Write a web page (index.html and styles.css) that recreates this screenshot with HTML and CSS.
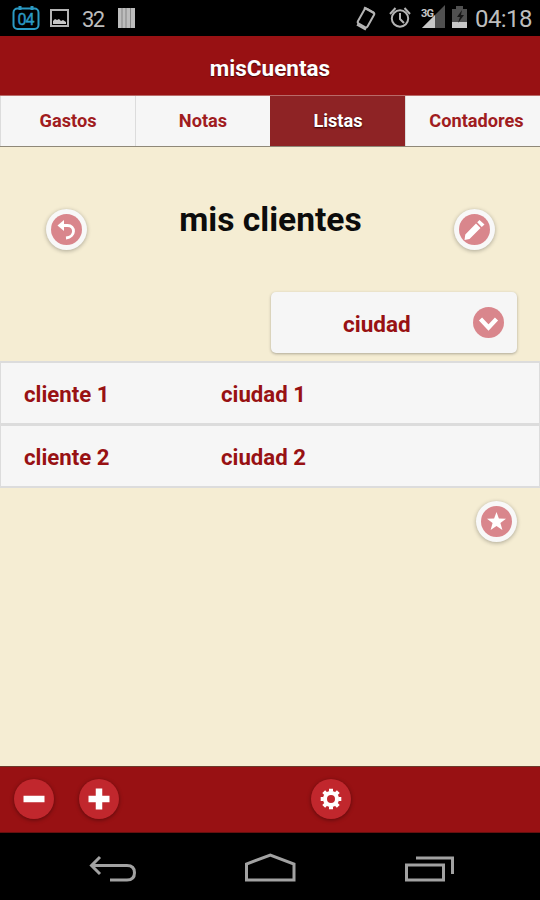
FILE: index.html
```html
<!DOCTYPE html>
<html lang="es">
<head>
    <meta charset="UTF-8">
    <meta name="viewport" content="width=device-width, initial-scale=1.0">
    <title>misCuentas</title>
    <link rel="stylesheet" href="styles.css">
</head>
<body>

    <div class="status-bar">
        <svg class="status-icons" width="150" height="36" viewBox="0 0 150 36">
            <rect x="13.5" y="8.5" width="25" height="20.5" rx="4" fill="none" stroke="#2b9ac4" stroke-width="2"/>
            <path d="M20 6v4M32 6v4" stroke="#2b9ac4" stroke-width="3"/>
            <text x="17.5" y="24.5" class="calendar-day" textLength="17">04</text>
            <rect x="51" y="10" width="17" height="16" fill="none" stroke="#b4b4b4" stroke-width="2"/>
            <path d="M53 24v-3l2-2 2 1 2-1 2 2 2-1 3 2v2z" fill="#c8c8c8"/>
            <text x="82" y="26.500" class="status-temp" textLength="23">32</text>
            <rect x="118" y="8" width="17" height="20" fill="#bdbdbd"/>
            <path d="M122 8v20M126 8v20M130.500 8v20" stroke="#858585" stroke-width="1"/>
        </svg>
        <div class="status-right">
            <svg width="120" height="36" viewBox="0 0 120 36">
                <g fill="none" stroke="#b4b4b4" stroke-width="2">
                    <rect x="1.500" y="8.500" width="11" height="17" rx="2" transform="translate(4 1) rotate(29 7 17)"/>
                    <path d="M9 7.500l10 5.500M2 24.500l9 5" stroke-width="2.500"/>
                    <circle cx="45" cy="18.500" r="8.200"/>
                    <path d="M45 13v6l4 4M35 14l5.500-6M49.500 8l5.500 6"/>
                </g>
                <path d="M90 5v23H67z" fill="#505050"/>
                <path d="M80 15v13H67z" fill="#c8c8c8"/>
                <text x="66" y="17" class="network-type" textLength="13">3G</text>
                <path d="M97 9h4V6h7v3h4v19H97z" fill="#505050"/>
                <path d="M97 22h15v6H97z" fill="#c8c8c8"/>
                <path d="M107 10l-5 7h3l-2 6 6-8h-3z" fill="#161616"/>
            </svg>
            <span class="clock">04:18</span>
        </div>
    </div>

    <header class="header">misCuentas</header>

    <nav class="tabs">
        <a class="tab">Gastos</a>
        <a class="tab">Notas</a>
        <a class="tab tab-active">Listas</a>
        <a class="tab tab-last">Contadores</a>
    </nav>

    <main class="content">
        <div class="title-row">
            <button class="round-btn" aria-label="Volver">
                <svg width="31" height="31" viewBox="0 0 31 31">
                    <circle cx="15.500" cy="15.500" r="15.500" fill="#d9868c"/>
                    <path d="M11 11.500h5.500c8 0 8.500 11.500-1.500 12.500" fill="none" stroke="#fff" stroke-width="2.800"/>
                    <path d="M6.500 11.500L13 6v11z" fill="#fff"/>
                </svg>
            </button>
            <h1 class="title">mis clientes</h1>
            <button class="round-btn" aria-label="Editar">
                <svg width="31" height="31" viewBox="0 0 31 31">
                    <circle cx="15.500" cy="15.500" r="15.500" fill="#d9868c"/>
                    <path d="M17 9.500l4.500 4.500L10.500 25l-5 1 .800-5.500zM18.200 8.300L20.500 6l5 4.500-2.800 2.500z" fill="#fff"/>
                </svg>
            </button>
        </div>

        <div class="select">
            <span>ciudad</span>
            <svg width="31" height="31" viewBox="0 0 31 31">
                <circle cx="15.500" cy="15.500" r="15.500" fill="#d9868c"/>
                <path d="M7.500 12l8 8.500 8-8.500" fill="none" stroke="#fff" stroke-width="4.300"/>
            </svg>
        </div>

        <div class="list">
            <div class="list-row"><span>cliente 1</span><span>ciudad 1</span></div>
            <div class="list-row"><span>cliente 2</span><span>ciudad 2</span></div>
        </div>

        <button class="round-btn star-btn" aria-label="Favorito">
            <svg width="31" height="31" viewBox="0 0 31 31">
                <circle cx="15.500" cy="15.500" r="15.500" fill="#d9868c"/>
                <path d="M15.500 6l2.400 6.600 7.100.200-5.600 4.300 2 6.900-5.900-4-5.900 4 2-6.900L6 12.800l7.100-.200z" fill="#fff"/>
            </svg>
        </button>
    </main>

    <footer class="footer">
        <button class="footer-btn" aria-label="Quitar">
            <svg width="22" height="22" viewBox="0 0 22 22"><path d="M.500 11h21" stroke="#fff" stroke-width="6.500"/></svg>
        </button>
        <button class="footer-btn" aria-label="Agregar">
            <svg width="22" height="22" viewBox="0 0 22 22"><path d="M.500 11h21M11 .500v21" stroke="#fff" stroke-width="6.500"/></svg>
        </button>
        <button class="footer-btn settings-btn" aria-label="Ajustes">
            <svg width="22" height="22" viewBox="0 0 22 22">
                <circle cx="11" cy="11" r="6" fill="none" stroke="#fff" stroke-width="4"/>
                <path d="M11 .700v3M11 18.300v3M.700 11h3M18.300 11h3M3.700 3.700l2.200 2.200M16.100 16.100l2.200 2.200M3.700 18.300l2.200-2.200M16.100 5.900l2.200-2.200" stroke="#fff" stroke-width="4"/>
            </svg>
        </button>
    </footer>

    <div class="nav-bar">
        <svg width="540" height="67" viewBox="0 0 540 67" fill="none" stroke="#a2a2a2" stroke-width="3">
            <path d="M100 24l-8.500 8.500 8.500 8.500M92 32.500h35q7.500 0 7.500 7.200t-7.500 7.300h-17"/>
            <path d="M246.500 47V31l23.800-9 23.700 9v16z"/>
            <path d="M406.500 32h37v15h-37zM416 25h36.500v16"/>
        </svg>
    </div>

</body>
</html>
```
FILE: styles.css
```css
* {
    box-sizing: border-box;
}

body {
    font-family: Roboto, "Liberation Sans", sans-serif;
    margin: 0;
    height: 900px;
    display: flex;
    flex-direction: column;
    overflow: hidden;
    background-color: #000;
}

button {
    border: none;
    padding: 0;
}

svg {
    display: block;
    flex-shrink: 0;
}

.status-bar {
    height: 36px;
    display: flex;
    justify-content: space-between;
    background-color: #000;
}

.status-right {
    display: flex;
    width: 185px;
    color: #bdbdbd;
}

.clock {
    font-size: 24px;
    line-height: 39px;
    letter-spacing: -0.6px;
}

.calendar-day {
    font-size: 16px;
    fill: #2b9ac4;
    stroke: #2b9ac4;
    stroke-width: 0.4px;
}

.status-temp {
    font-size: 22px;
    fill: #bdbdbd;
}

.network-type {
    font-size: 11px;
    font-weight: bold;
    fill: #c8c8c8;
}

.header {
    height: 59px;
    line-height: 64px;
    text-align: center;
    font-size: 22.5px;
    font-weight: bold;
    color: #fff;
    background-color: #981113;
    text-shadow: 0 1px 1px #4a0808;
}

.tabs {
    height: 52px;
    display: flex;
    border-top: 1px solid #b96a68;
    border-bottom: 1px solid #8f8878;
}

.tab {
    width: 135px;
    flex-shrink: 0;
    line-height: 50px;
    text-align: center;
    font-size: 18.2px;
    font-weight: bold;
    color: #a01c20;
    background-color: #f6f6f6;
    border-left: 1px solid #dcdcdc;
}

.tab-active {
    color: #fff;
    background-color: #8e2325;
    border-left-color: #8e2325;
    text-shadow: 0 1px 2px #300;
}

.tab-last {
    width: 142px;
}

.content {
    height: 619px;
    background-color: #f5edd3;
}

.title-row {
    height: 145px;
    padding: 42px 45px 0 46px;
    display: flex;
    align-items: flex-start;
    justify-content: space-between;
}

.title {
    margin: 9px 0 0;
    font-size: 33.6px;
    line-height: 44px;
    font-weight: bold;
    color: #0c0c0c;
}

.round-btn {
    width: 41px;
    height: 41px;
    margin-top: 20px;
    display: flex;
    align-items: center;
    justify-content: center;
    border-radius: 50%;
    background-color: #f8f8f8;
    box-shadow: 0 1px 4px rgba(0, 0, 0, 0.3);
}

.select {
    width: 246px;
    height: 61px;
    margin-left: 271px;
    padding: 0 13px 0 72px;
    display: flex;
    align-items: center;
    justify-content: space-between;
    font-size: 22.5px;
    font-weight: bold;
    color: #981113;
    background-color: #f6f6f6;
    border-radius: 5px;
    box-shadow: 0 1px 3px rgba(0, 0, 0, 0.3);
}

.select span {
    padding-top: 2px;
}

.list {
    margin-top: 8px;
    border: 1px solid #dcdcdc;
    border-width: 1px 0 0;
}

.list-row {
    height: 63px;
    padding: 2px 0 0 23px;
    display: grid;
    grid-template-columns: 197px 1fr;
    align-items: center;
    font-size: 22.2px;
    font-weight: bold;
    color: #981113;
    background-color: #f6f6f6;
    border: 1px solid #dcdcdc;
    border-width: 1px 1px 2px 1px;
}

.star-btn {
    margin: 13px 0 0 476px;
}

.footer {
    height: 67px;
    padding: 0 14px 1px;
    display: flex;
    align-items: center;
    gap: 25px;
    background-color: #981113;
    border-top: 1px solid #6a3a2a;
    border-bottom: 1px solid #65100f;
}

.footer-btn {
    width: 40px;
    height: 40px;
    display: flex;
    align-items: center;
    justify-content: center;
    border-radius: 50%;
    background-color: #c1272d;
    box-shadow: 0 1px 4px rgba(0, 0, 0, 0.4);
}

.settings-btn {
    margin-left: 167px;
}

.nav-bar {
    height: 67px;
    background-color: #000;
}
```
